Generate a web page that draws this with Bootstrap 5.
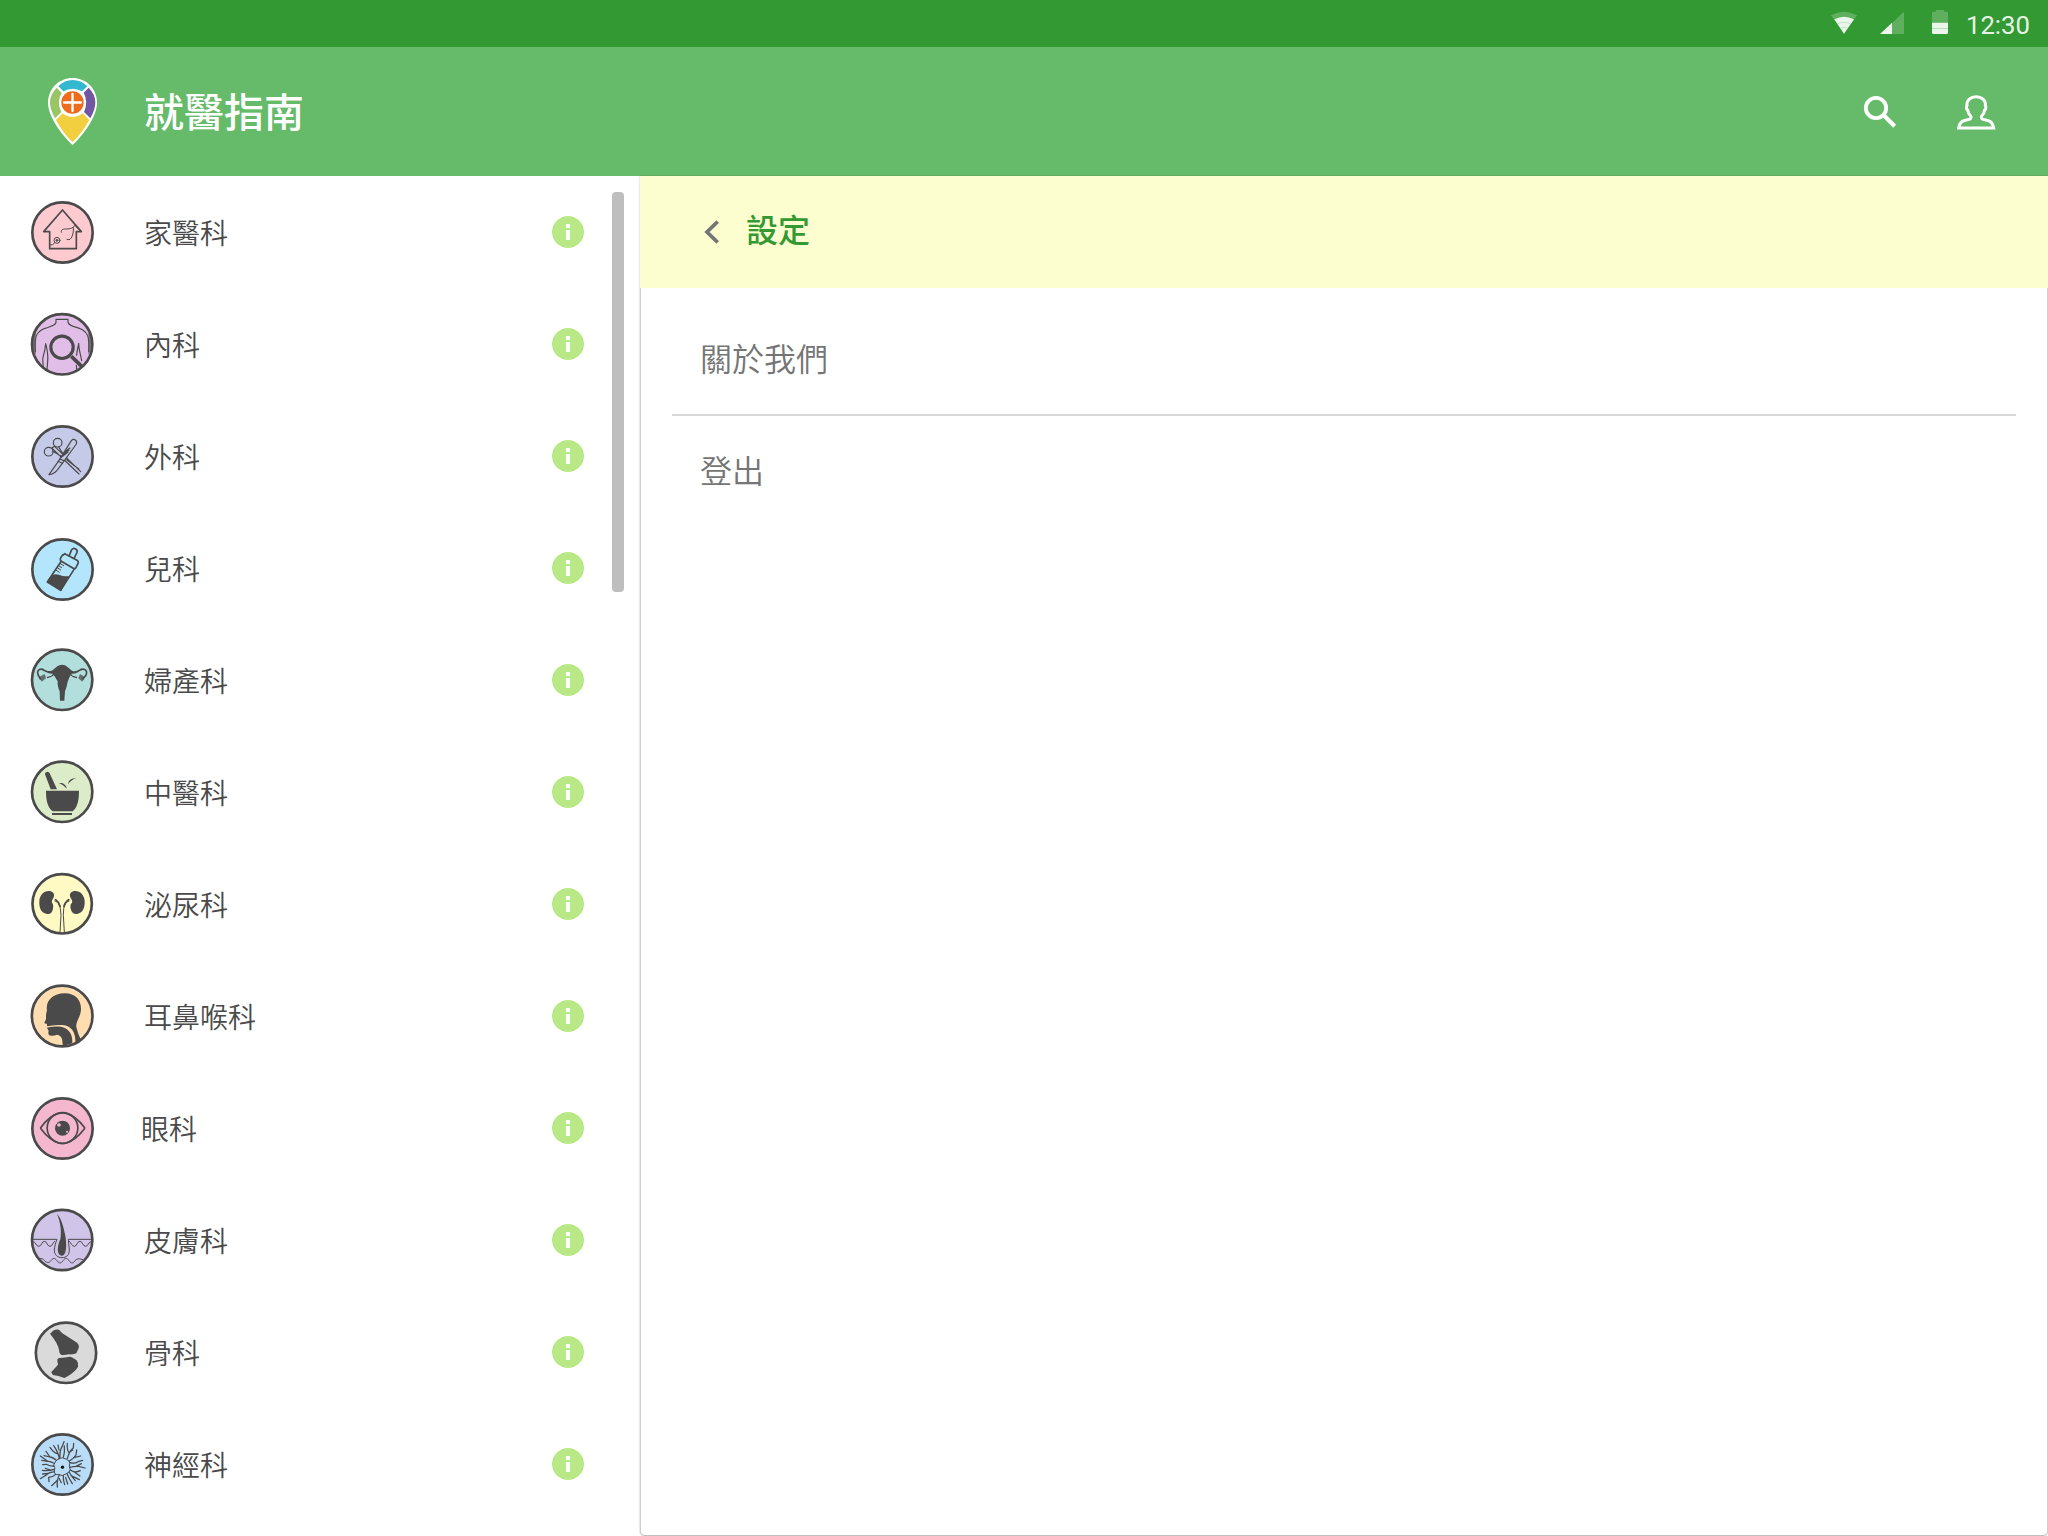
<!DOCTYPE html>
<html lang="zh-Hant">
<head>
<meta charset="utf-8">
<meta name="viewport" content="width=device-width, initial-scale=1">
<title>就醫指南</title>
<link rel="stylesheet" href="https://cdn.jsdelivr.net/npm/bootstrap@5.3.0/dist/css/bootstrap.min.css">
<style>
body{font-family:"Noto Sans CJK TC","Noto Sans",sans-serif;color:#4a4a4a;background:#fff;height:1536px;overflow:hidden}
svg{display:block;flex:none;overflow:visible}
.status-bar{height:47px;background:#339933;padding-right:18px}
.status-icons{padding-top:1px}
.clock{font:400 25.700px/46px Roboto,sans-serif;color:rgba(255,255,255,.9);width:64px;margin-left:10px;padding-top:2px;white-space:nowrap}
.app-bar{height:129px;background:#66bb6a;padding:1px 48px 0 44px}
.app-title{font-size:40px;line-height:60px;font-weight:500;color:#fff;margin-left:44px;padding-bottom:4px}
.side-list{width:640px;height:1360px;background:#fff}
.dept{height:112px;padding:0 56px 0 30px}
.dept-name{font-size:28px;line-height:42px;margin-left:50px;font-weight:350}
.dept-name.shifted{margin-left:47px}
.scroll-thumb{position:absolute;left:612px;top:16px;width:12px;height:400px;border-radius:4px;background:#bebebe}
.panel{border:1px solid #cfcfcf;border-top:0;border-bottom-color:#bdbdbd;border-radius:0 0 5px 5px;background:#fff;height:1360px;box-shadow:0 0 2px rgba(0,0,0,.3)}
.panel-head{height:112px;background:#fdfed0;padding-left:48px;margin:0 -1px}
.panel-title{font-size:32px;line-height:48px;font-weight:500;color:#339933;margin-left:10px;padding-bottom:9px}
.menu-box{padding:16px 31px 0 31px}
.menu-row{height:112px;padding:0 0 6px 28px;font-size:32px;line-height:48px;color:#757575;font-weight:350}
.menu-row.divided{border-bottom:2px solid #d8d8d8;padding-bottom:4px}
.ink{fill:#4a4a4a}
.ln{fill:none;stroke:#4a4a4a;stroke-linecap:round;stroke-linejoin:round}
.ring{stroke:#4a4a4a;stroke-width:8}
</style>
<script src="https://cdn.jsdelivr.net/npm/bootstrap@5.3.0/dist/js/bootstrap.bundle.min.js"></script>
</head>
<body>
<svg width="0" height="0" class="position-absolute" aria-hidden="true">
  <symbol id="info" viewBox="0 0 32 32"><circle cx="16" cy="16" r="16" fill="#b8e986"/><path d="M14 8h4v4h-4zM14 14h4v10h-4z" fill="#fff"/></symbol>
</svg>

<div class="status-bar d-flex align-items-center justify-content-end">
  <div class="status-icons d-flex gap-3">
    <svg width="32" height="32" viewBox="84 24 96 96"><path d="M93 46Q132 24 171 46L132 101Z" fill="#fff" opacity=".22"/><path d="M103 58Q132 42 162 58L132 101Z" fill="#fff" opacity=".88"/><path d="M112 72Q132 62 152 72M122 84Q132 80 142 84" fill="none" stroke="#66bb6a" stroke-width="1.5" opacity=".6"/></svg>
    <svg width="32" height="32" viewBox="228 24 96 96"><path d="M312 35V102H276V69Z" fill="#fff" opacity=".22"/><path d="M276 68V102H240Z" fill="#fff" opacity=".9"/></svg>
    <svg width="32" height="32" viewBox="372 24 96 96"><path d="M396 68V39Q396 35 400 35H408V30H432V35H440Q444 35 444 39V68Z" fill="#fff" opacity=".22"/><path d="M396 68H444V98Q444 102 440 102H400Q396 102 396 98Z" fill="#fff" opacity=".9"/><path d="M396 85.500H444" stroke="#66bb6a" stroke-width="2" opacity=".6"/></svg>
  </div>
  <div class="clock">12:30</div>
</div>

<header class="app-bar d-flex align-items-center">
  <svg width="56" height="76" viewBox="132 102 168 228">
    <path d="M217.500 114C258 114 291 146 291 188C291 228 252 283 217.500 315C183 283 144 228 144 188C144 146 177 114 217.500 114Z" fill="#fff"/>
    <path d="M175 139Q193 120 218 120Q243 120 262 139L246 154Q218 139 190 154Z" fill="#33b8cf"/>
    <path d="M170 143L185 158Q169 186 184 216L165 235Q150 207 150 188Q150 163 170 143Z" fill="#9ac565"/>
    <path d="M266 143L251 158Q266 186 252 216L271 235Q286 207 286 188Q286 163 266 143Z" fill="#7156a1"/>
    <path d="M188 220Q218 243 248 220L268 240Q247 278 217.500 307Q188 278 168 240Z" fill="#f2cf3f"/>
    <circle cx="217.500" cy="187.500" r="38" fill="#fff"/><circle cx="217.500" cy="187.500" r="33.500" fill="#ee6c1b"/>
    <path d="M192 187.500H243M217.500 162V213" stroke="#fff" stroke-width="7" stroke-linecap="round"/>
  </svg>
  <h1 class="app-title mb-0">就醫指南</h1>
  <div class="d-flex ms-auto gap-5">
    <svg width="48" height="48" viewBox="168 264 144 144" fill="none" stroke="#fff"><circle cx="228" cy="324" r="30.500" stroke-width="11.500"/><path d="M251 346L284 379" stroke-width="12.500"/></svg>
    <svg width="48" height="48" viewBox="456 264 144 144" fill="none" stroke="#fff" stroke-width="9"><path d="M476 384C478 365 492 360 503 359C513 358 515 353 512 348C506 342 504 337 503 330C498 328 499 321 501 317C499 300 512 290 528.500 290C545 290 558 300 556 317C558 321 559 328 554 330C553 337 551 342 545 348C542 353 544 358 554 359C565 360 579 365 581 384Z"/></svg>
  </div>
</header>

<main class="d-flex">
  <nav class="side-list position-relative flex-shrink-0">
    <div class="dept d-flex align-items-center">
      <svg width="64" height="64" viewBox="90 480 192 192"><circle class="ring" cx="187.500" cy="577.500" r="90.500" fill="#fccacf"/>
        <g class="ln" stroke-width="5"><path d="M187.500 510L131 575H149V626H229V575H244Z"/></g>
        <g class="ln" stroke-width="3"><path d="M184 577C182 568 190 567 199 567C212 567 220 564 226 555M220 563C222 575 216 598 207 599L201 598M226 557L235 567"/><circle cx="171" cy="601" r="9"/><path d="M164 609Q158 617 151 615"/></g><circle class="ink" cx="171" cy="601" r="4"/></svg>
      <span class="dept-name">家醫科</span><svg class="ms-auto" width="32" height="32"><use href="#info"/></svg>
    </div>
    <div class="dept d-flex align-items-center">
      <svg width="64" height="64" viewBox="90 66 192 192"><circle cx="186.500" cy="163" r="90.500" fill="#e1bee7"/>
        <path class="ink" d="M98 150Q102 130 108 128Q104 155 108 195Q98 180 98 150ZM275 150Q270 130 264 128Q269 155 265 195Q275 180 275 150Z" opacity=".65"/>
        <g class="ln" stroke-width="3.500"><path d="M106 185C104 140 106 127 135 115C155 108 167 106 168 97V88H204V97C206 106 217 108 238 115C266 127 268 140 266 185M129 234C131 220 126 212 129 202C134 185 136 175 137 161C142 180 144 205 143 214L141 238M236 160C236 178 242 195 245 212M236 162C233 175 230 188 230 196M229 226L230 236"/></g>
        <circle class="ln" cx="186" cy="172" r="33.500" stroke-width="9.500"/><path class="ln" style="stroke-linecap:butt" d="M214 199L246 230" stroke-width="11"/>
        <circle class="ring" cx="186.500" cy="163" r="90.500" fill="none"/></svg>
      <span class="dept-name">內科</span><svg class="ms-auto" width="32" height="32"><use href="#info"/></svg>
    </div>
    <div class="dept d-flex align-items-center">
      <svg width="64" height="64" viewBox="90 402 192 192"><circle class="ring" cx="187.500" cy="499.500" r="90.500" fill="#c5cae9"/>
        <g class="ln" stroke-width="3.500"><circle cx="173" cy="458" r="13"/><circle cx="146" cy="485" r="13"/><path d="M155 474L237 552M164 469L242 545M155 474L164 469M158 484L190 502M176 471L192 497M200 509L237 538"/>
        <path fill="#c5cae9" d="M147 554L175 514L214 452Q220 446 226 450Q232 455 229 462L187 520L171 541Q162 552 147 554Z"/><path d="M174 514L187 520M179 507L192 512M183 503L204 486M188 495L207 480M193 486L210 474"/></g></svg>
      <span class="dept-name">外科</span><svg class="ms-auto" width="32" height="32"><use href="#info"/></svg>
    </div>
    <div class="dept d-flex align-items-center">
      <svg width="64" height="64" viewBox="90 78 192 192"><circle class="ring" cx="187.500" cy="178.500" r="90.500" fill="#b3e5fc"/>
        <g class="ln" stroke-width="5"><path d="M184 153L142 216L182 241L224 175M190 135Q188 132 181 146Q180 151 184 154L222 176Q226 177 228 173L235 158Q236 154 231 151L194 131ZM208 136L215 119Q220 113 227 117Q233 120 231 127L223 144"/><path stroke-width="3" d="M181 161L191 167M177 168L185 173M173 174L182 180M169 181L178 187"/></g>
        <path class="ink" d="M155 196Q166 190 179 195Q190 200 207 198L184 242L141 216Z"/></svg>
      <span class="dept-name">兒科</span><svg class="ms-auto" width="32" height="32"><use href="#info"/></svg>
    </div>
    <div class="dept d-flex align-items-center">
      <svg width="64" height="64" viewBox="90 414 192 192"><circle class="ring" cx="186.500" cy="509.500" r="90.500" fill="#b2dfdb"/>
        <path class="ink" d="M186 464C199 464 206 475 216 482C228 487 235 478 245 476L246 481C237 483 230 493 215 491C207 500 206 510 203 515C201 525 199 535 195 544L193 572H180L179 544C174 535 172 520 173 514C168 507 166 499 157 491C144 492 135 484 126 481L128 476C137 479 143 486 155 482C165 476 173 464 186 464Z"/>
        <g class="ln" stroke-width="5"><path d="M128 478C116 475 110 484 114 493C116 500 119 501 121 507M244 478C257 475 262 484 259 493C257 500 251 501 249 507"/></g>
        <path class="ink" d="M117 501L134 492L138 505L125 515ZM255 501L240 492L235 505L247 515Z" opacity=".75"/><path class="ink" d="M140 501L154 497L161 490L162 495L155 500L142 505ZM232 501L218 497L211 490L211 495L218 501L230 505Z"/></svg>
      <span class="dept-name">婦產科</span><svg class="ms-auto" width="32" height="32"><use href="#info"/></svg>
    </div>
    <div class="dept d-flex align-items-center">
      <svg width="64" height="64" viewBox="90 60 192 192"><circle class="ring" cx="186.500" cy="155.500" r="90.500" fill="#dcebc8"/>
        <path class="ink" d="M138 152H237C237 176 234 201 218 214H158C141 201 138 176 138 152ZM156 219H216V225H156ZM152 148L135 103Q134 97 140 96Q147 94 149 100L171 148ZM177 130Q194 126 201 146Q193 135 177 130ZM204 133Q206 114 229 114Q213 119 204 133Z"/></svg>
      <span class="dept-name">中醫科</span><svg class="ms-auto" width="32" height="32"><use href="#info"/></svg>
    </div>
    <div class="dept d-flex align-items-center">
      <svg width="64" height="64" viewBox="90 396 192 192"><circle class="ring" cx="186.500" cy="491.500" r="89" fill="#fff9c4"/>
        <path class="ink" d="M147 453C157 453 164 460 162 469C160 477 154 481 156 488C159 491 161 497 159 506C157 519 149 524 138 521C123 518 117 503 118 483C119 464 133 452 147 453ZM225 453C215 453 208 460 210 469C212 477 219 481 216 488C212 491 210 497 212 506C215 519 223 524 234 521C248 518 255 503 254 483C253 464 239 452 225 453Z"/>
        <g class="ln"><path stroke-width="5.500" d="M167 479Q176 485 180 499M206 479Q196 485 192 499"/><path stroke-width="3" d="M176 488Q183 505 183 526L180 576M196 488Q189 505 190 526L193 576"/><path stroke-width="2" d="M164 483L169 486M208 483L203 486"/></g></svg>
      <span class="dept-name">泌尿科</span><svg class="ms-auto" width="32" height="32"><use href="#info"/></svg>
    </div>
    <div class="dept d-flex align-items-center">
      <svg width="64" height="64" viewBox="90 72 192 192"><circle cx="186.500" cy="168" r="90.500" fill="#ffddb0"/>
        <path class="ink" d="M141 151C136 124 158 100 193 100C225 99 244 120 243 148C242 175 224 185 230 205Q234 222 242 238L226 248C228 219 215 197 188 195C170 195 155 196 141 199L141 191Q135 192 133 189Q134 185 138 178V166Q139 157 141 151Z"/>
        <path class="ink" d="M141 203C166 199 184 198 196 205C212 214 218 229 217 250L188 258C188 238 186 227 171 224C160 228 150 228 147 225C144 220 145 215 146 212Q143 208 141 203Z"/>
        <circle class="ring" cx="186.500" cy="168" r="91" fill="none"/></svg>
      <span class="dept-name">耳鼻喉科</span><svg class="ms-auto" width="32" height="32"><use href="#info"/></svg>
    </div>
    <div class="dept d-flex align-items-center">
      <svg width="64" height="64" viewBox="90 408 192 192"><circle class="ring" cx="187.500" cy="505.500" r="90.500" fill="#f5b7ce"/>
        <g class="ln" stroke-width="5"><circle cx="187.500" cy="504" r="46"/><path d="M122 503Q148 467 176 460Q187.500 457 199 460Q227 467 254 503Q254 506 252 508Q228 540 199 549Q187.500 552 176 549Q148 540 124 508Q122 505 122 503Z"/></g>
        <circle class="ink" cx="187.500" cy="504.500" r="22.500"/><g fill="#f5b7ce"><circle cx="177" cy="495" r="5.500"/><circle cx="170" cy="490" r="2"/><circle cx="201" cy="515" r="3"/></g></svg>
      <span class="dept-name shifted">眼科</span><svg class="ms-auto" width="32" height="32"><use href="#info"/></svg>
    </div>
    <div class="dept d-flex align-items-center">
      <svg width="64" height="64" viewBox="90 54 192 192"><circle class="ring" cx="186.500" cy="150" r="90.500" fill="#d1c4e9"/>
        <path class="ink" d="M171 72C184 85 190 108 195 133C200 155 202 197 186 197C168 197 173 164 181 148C185 125 182 97 171 72Z"/>
        <g class="ln" stroke-width="3"><path d="M100 148H171C166 160 164 169 163 180C163 195 173 203 186 203C199 203 208 195 208 180C208 169 205 160 205 148H274M100 155C107 155 108 169 116 169C125 169 125 154 133 154C142 154 141 169 150 169C158 169 158 155 164 154M208 154C213 158 216 169 223 169C231 169 231 154 240 154C248 154 248 169 257 169C265 169 265 155 273 155M118 207C125 204 129 206 134 212C142 221 148 218 153 212C160 203 164 203 171 212C178 221 183 221 189 212C196 203 201 203 207 212C214 221 219 221 225 212C232 204 240 206 248 209"/></g></svg>
      <span class="dept-name">皮膚科</span><svg class="ms-auto" width="32" height="32"><use href="#info"/></svg>
    </div>
    <div class="dept d-flex align-items-center">
      <svg width="64" height="64" viewBox="90 390 192 192"><circle class="ring" cx="198" cy="488.500" r="90.500" fill="#dadada"/>
        <path class="ink" d="M150 431Q156 426 159 422Q168 417 177 419L186 429L229 457Q239 464 236 475L229 490Q222 494 207 493Q190 497 183 494Q177 489 177 480Q174 460 150 431ZM172 512Q171 505 179 504Q195 502 209 500Q217 501 230 511Q236 519 234 530Q228 543 203 559L193 564Q175 557 159 555Q155 550 154 546L174 524Z"/></svg>
      <span class="dept-name">骨科</span><svg class="ms-auto" width="32" height="32"><use href="#info"/></svg>
    </div>
    <div class="dept d-flex align-items-center">
      <svg width="64" height="64" viewBox="90 726 192 192"><circle class="ring" cx="187.500" cy="823.500" r="90.500" fill="#b9dcf8"/>
        <g class="ln" stroke-width="3.800"><path d="M176 806Q187 799 200 808Q210 812 209 820Q206 832 211 839Q208 849 199 851Q188 861 177 854Q162 855 163 843Q167 832 161 825Q166 811 176 806Z" stroke-width="3"/>
        <path d="M178 806Q175 787 161 767M172 791Q160 787 150 772M180 801Q178 783 188 766L192 755M177 780L174 765M190 802Q195 787 193 768M202 806Q207 785 220 773L221 760M207 788Q200 778 202 760M209 786L218 780M208 813Q220 807 228 795L230 780M221 803L242 798M210 818Q225 822 234 815L248 811M209 832Q224 828 236 829L255 834M228 829L244 821M211 840Q224 850 241 842M222 845L240 858M207 846Q216 861 226 872M213 857L238 869M201 851Q208 867 217 881M190 856Q189 871 194 884M197 862L203 882M178 855Q170 869 172 891M173 870L155 887M178 866L184 878M167 853Q158 862 146 862L147 875M163 846Q149 845 140 854L121 866M145 850L128 852M162 838Q146 843 127 841M151 840L136 835M161 828Q148 829 139 823L128 824M162 820Q151 813 143 814L121 798M143 814L125 811M168 810Q157 801 150 801L138 784M150 801L132 797"/></g><circle cx="187.500" cy="831.500" r="5" fill="#111"/></svg>
      <span class="dept-name">神經科</span><svg class="ms-auto" width="32" height="32"><use href="#info"/></svg>
    </div>
    <div class="scroll-thumb"></div>
  </nav>

  <section class="panel position-relative flex-grow-1">
    <div class="panel-head d-flex align-items-center">
      <svg width="48" height="48" viewBox="474 114 144 144"><path d="M563 155L531 186L563 217" fill="none" stroke="#757575" stroke-width="11"/></svg>
      <h2 class="panel-title mb-0">設定</h2>
    </div>
    <div class="menu-box">
      <div class="menu-row divided d-flex align-items-center">關於我們</div>
      <div class="menu-row d-flex align-items-center">登出</div>
    </div>
  </section>
</main>
</body>
</html>
